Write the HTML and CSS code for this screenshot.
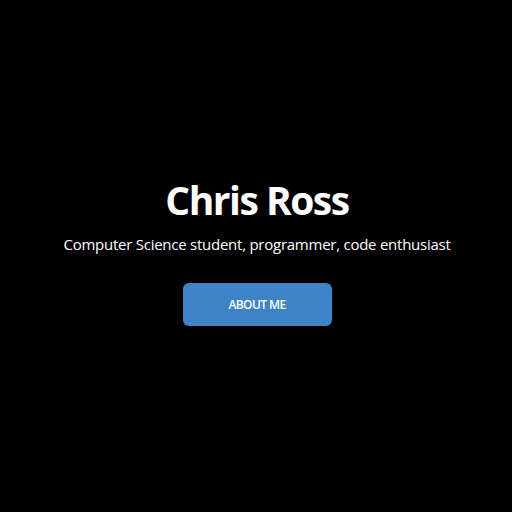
FILE: index.html
```html
<!DOCTYPE html>
<html>
<head>
<meta charset="utf-8">
<link rel="stylesheet" href="styles.css">
</head>
<body>
<header class="hero">
  <h1 class="hero-title">Chris Ross</h1>
  <p class="hero-sub">Computer Science student, programmer, code enthusiast</p>
  <a class="hero-btn" href="#about">ABOUT ME</a>
</header>
</body>
</html>
```
FILE: styles.css
```css
html, body {
  margin: 0;
  padding: 0;
  background: #000;
  height: 100%;
}
.hero {
  height: 512px;
  display: flex;
  flex-direction: column;
  align-items: center;
  justify-content: flex-start;
  font-family: "Open Sans", sans-serif;
  color: #fff;
  padding-top: 174px;
  padding-left: 2px;
  box-sizing: border-box;
}
.hero-title {
  margin: 0;
  font-size: 39px;
  font-weight: 700;
  letter-spacing: -1.5px;
  line-height: 52px;
}
.hero-sub {
  margin: 6px 0 0;
  font-size: 15px;
  letter-spacing: -0.25px;
  line-height: 24px;
}
.hero-btn {
  margin-top: 27px;
  width: 149px;
  height: 43px;
  display: flex;
  align-items: center;
  justify-content: center;
  background: #3d84c6;
  border-radius: 6px;
  color: #fff;
  text-decoration: none;
  font-size: 12px;
  font-weight: 600;
  letter-spacing: -0.6px;
}
```
